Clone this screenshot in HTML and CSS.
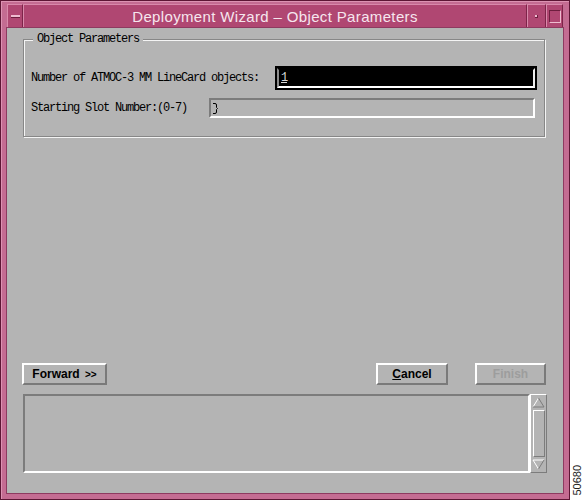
FILE: index.html
```html
<!DOCTYPE html>
<html lang="en">

<head>
  <meta charset="UTF-8" />
  <meta name="viewport" content="width=device-width, initial-scale=1.0" />
  <title>Deployment Wizard – Object Parameters</title>
  <link rel="stylesheet" href="styles.css">
</head>

<body>
  <div class="page">
    <div class="window">
      <div class="titlebar">
        <div class="tb-btn tb-menu"><span class="menu-bar"></span></div>
        <div class="tb-title">Deployment Wizard – Object Parameters</div>
        <div class="tb-btn tb-min"><span class="min-dot"></span></div>
        <div class="tb-btn tb-max"><span class="max-box"></span></div>
      </div>

      <div class="content">
        <div class="group">
          <div class="group-title">Object Parameters</div>
          <div class="row row-count">
            <span class="label">Number of ATMOC-3 MM LineCard objects:</span>
            <div class="field field-focus">
              <div class="field-inner"><span class="caret-text">1</span></div>
            </div>
          </div>
          <div class="row row-slot">
            <span class="label">Starting Slot Number:(0-7)</span>
            <div class="field field-plain">
              <svg class="ibeam" width="7" height="13" viewBox="0 0 7 13">
                <path d="M1 1.5 H3 Q4.5 1.5 4.5 3 V5.5 L5.5 6.5 L4.5 7.5 V10 Q4.5 11.5 3 11.5 H1" fill="none" stroke="#000" stroke-width="1" />
              </svg>
            </div>
          </div>
        </div>

        <div class="spacer"></div>

        <div class="buttons">
          <button class="btn btn-forward">Forward <span class="arrows">&gt;&gt;</span></button>
          <div class="spacer"></div>
          <button class="btn btn-cancel"><u>C</u>ancel</button>
          <button class="btn btn-finish" disabled>Finish</button>
        </div>

        <div class="log">
          <div class="log-text"></div>
          <div class="scrollbar">
            <svg class="arrow" width="13" height="11" viewBox="0 0 13 11">
              <polygon points="6.5,1 12,10 1,10" fill="#b4b4b4" />
              <path d="M1 10 L6.5 1" stroke="#fff" stroke-width="1" fill="none" />
              <path d="M6.5 1 L12 10 H1" stroke="#7c7c7c" stroke-width="1" fill="none" />
            </svg>
            <div class="thumb"></div>
            <svg class="arrow" width="13" height="11" viewBox="0 0 13 11">
              <polygon points="1,1 12,1 6.5,10" fill="#b4b4b4" />
              <path d="M6.5 10 L1 1 H12" stroke="#fff" stroke-width="1" fill="none" />
              <path d="M12 1 L6.5 10" stroke="#7c7c7c" stroke-width="1" fill="none" />
            </svg>
          </div>
        </div>
      </div>
    </div>
    <div class="fig-no">50680</div>
  </div>
</body>

</html>
```

FILE: styles.css
```css
html,
body {
  margin: 0;
  height: 100%;
  background: #fff;
  overflow: hidden;
}

.page {
  display: flex;
  align-items: flex-end;
  height: 500px;
}

.window {
  width: 570px;
  height: 500px;
  flex-shrink: 0;
  box-sizing: border-box;
  border: 1px solid #5c1634;
  padding: 3px 6px 6px 6px;
  background: #c46c92;
  display: flex;
  flex-direction: column;
  box-shadow: inset 1px 1px 0 #dc93b2;
}

/* title bar */
.titlebar {
  height: 24px;
  display: flex;
  background: #b04772;
}

.tb-btn,
.tb-title {
  box-sizing: border-box;
  border-style: solid;
  border-width: 1px;
  border-color: #d98aab #7d2449 #7d2449 #d98aab;
  display: flex;
  align-items: center;
  justify-content: center;
}

.tb-menu {
  width: 16px;
}

.menu-bar {
  width: 9px;
  height: 2px;
  background: #eebcd0;
  border-bottom: 1px solid #6d1e3e;
}

.tb-title {
  flex: 1;
  color: #f6e6ee;
  font-family: "Liberation Sans", Arial, sans-serif;
  font-size: 15px;
  letter-spacing: 0.35px;
}

.tb-min {
  width: 19px;
}

.min-dot {
  width: 2px;
  height: 2px;
  background: #eebcd0;
  border-right: 1px solid #6d1e3e;
  border-bottom: 1px solid #6d1e3e;
}

.tb-max {
  width: 17px;
}

.max-box {
  width: 10px;
  height: 11px;
  border-style: solid;
  border-width: 1px;
  border-color: #6d1e3e #eebcd0 #eebcd0 #6d1e3e;
}

/* main area */
.content {
  flex: 1;
  background: #b4b4b4;
  padding: 11px 16px 20px 15px;
  display: flex;
  flex-direction: column;
  box-shadow: 0 0 0 1px #8e3a60;
  font-family: "Liberation Mono", "Courier New", monospace;
  font-size: 12px;
  letter-spacing: -1.2px;
  color: #000;
}

.spacer {
  flex: 1;
}

.group {
  height: 98px;
  box-sizing: border-box;
  margin: 0 2px 0 1px;
  padding: 0 7px;
  border: 1px solid #878787;
  box-shadow: inset 1px 1px 0 #f4f4f4, 1px 1px 0 #f4f4f4;
  display: flex;
  flex-direction: column;
}

.group-title {
  align-self: flex-start;
  margin: -7px 0 0 2px;
  padding: 0 4px;
  line-height: 12px;
  background: #b4b4b4;
}

.row {
  display: flex;
  align-items: center;
}

.row-count {
  margin-top: 21px;
  height: 24px;
}

.row-slot {
  margin-top: 8px;
  height: 20px;
}

.label {
  white-space: nowrap;
  width: 228px;
}

.row-slot .label {
  width: 156px;
}

.field {
  box-sizing: border-box;
  height: 100%;
}

.field-focus {
  width: 262px;
  margin-left: 16px;
  border: 2px solid #000;
}

.field-inner {
  box-sizing: border-box;
  height: 100%;
  border-style: solid;
  border-width: 2px;
  border-color: #000 #eeeeee #ffffff #8c8c8c;
  background: #000;
  color: #d8d8d8;
  padding-left: 2px;
  line-height: 16px;
}

.caret-text {
  text-decoration: underline;
}

.field-plain {
  width: 326px;
  margin-left: 22px;
  border-style: solid;
  border-width: 2px;
  border-color: #7c7c7c #ffffff #ffffff #7c7c7c;
  display: flex;
  align-items: center;
  padding-left: 1px;
}

.ibeam {
  display: block;
}

/* buttons */
.buttons {
  height: 22px;
  display: flex;
}

.btn {
  box-sizing: border-box;
  height: 22px;
  margin: 0;
  padding: 0;
  background: #b4b4b4;
  border-style: solid;
  border-width: 2px;
  border-color: #ffffff #7a7a7a #7a7a7a #ffffff;
  font-family: "Liberation Sans", Arial, sans-serif;
  font-weight: bold;
  font-size: 12px;
  color: #000;
  letter-spacing: 0;
}

.btn-forward {
  width: 85px;
}

.arrows {
  font-size: 10px;
  margin-left: 2px;
}

.btn-cancel {
  width: 72px;
}

.btn-finish {
  width: 71px;
  margin-left: 27px;
  margin-right: 1px;
  color: #9d9d9d;
}

/* message area */
.log {
  margin-top: 9px;
  height: 79px;
  display: flex;
  margin-left: 1px;
}

.log-text {
  flex: 1;
  border-style: solid;
  border-width: 2px;
  border-color: #7c7c7c #ffffff #ffffff #7c7c7c;
}

.scrollbar {
  width: 17px;
  box-sizing: border-box;
  border-style: solid;
  border-width: 1px;
  border-color: #ffffff #7c7c7c #7c7c7c #ffffff;
  background: #b4b4b4;
  display: flex;
  flex-direction: column;
  align-items: center;
  padding: 2px 0;
}

.arrow {
  display: block;
}

.thumb {
  flex: 1;
  width: 12px;
  box-sizing: border-box;
  margin: 2px 0;
  background: #b4b4b4;
  border-style: solid;
  border-width: 1px;
  border-color: #ffffff #7c7c7c #7c7c7c #ffffff;
}

.fig-no {
  writing-mode: vertical-rl;
  transform: rotate(180deg);
  font-family: "Liberation Sans", Arial, sans-serif;
  font-size: 11px;
  line-height: 9px;
  color: #222;
  margin: 0 0 4px 3px;
}
```
